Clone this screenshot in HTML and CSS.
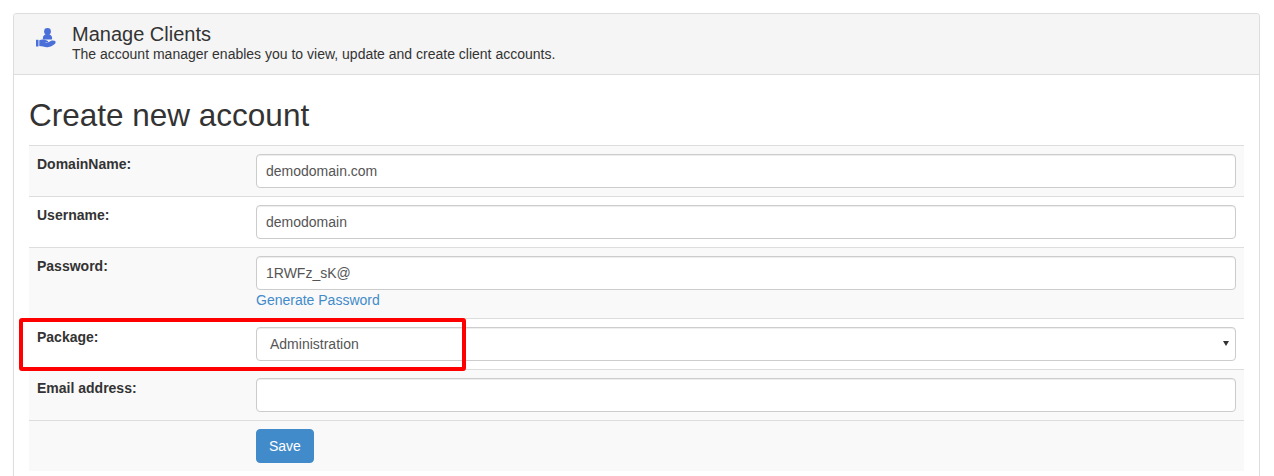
FILE: index.html
```html
<!DOCTYPE html>
<html lang="en">
<head>
<meta charset="utf-8">
<title>Manage Clients</title>
<link rel="stylesheet" href="styles.css">
</head>
<body>
<div class="panel">
  <div class="panel-head">
    <svg class="head-icon" viewBox="0 0 20 20" width="20" height="20" aria-hidden="true">
      <circle cx="11.500" cy="3.400" r="3.400" fill="#4a6fd8"/>
      <path d="M6.800 10.500c0-2.700 2-4.400 4.700-4.400s4.700 1.700 4.700 4.400c0 .6-.3 1-.9 1H7.700c-.6 0-.9-.4-.9-1z" fill="#4a6fd8"/>
      <path d="M0 11.800h2.500V18.500H0z" fill="#4a6fd8"/>
      <path d="M3.300 12.300c1.800-1 3.700-1.100 5.400-.5l2.700.9c1.200.4.900 1.900-.4 1.800l-2.600-.2 2.400.8 4.400-2.300c1-.5 1.700-.4 2.500 0 .5-.3 1.500-.2 1.800.6.300 1-.1 2-1.100 2.800-1.800 1.500-4 2.700-6.500 3-2 .2-3.300-.3-4.800-.8l-3.800-.5z" fill="#4a6fd8"/>
    </svg>
    <div class="head-text">
      <div class="head-title">Manage Clients</div>
      <div class="head-sub">The account manager enables you to view, update and create client accounts.</div>
    </div>
  </div>
  <div class="panel-body">
    <h1 class="title">Create new account</h1>
    <div class="table">
      <div class="row shade">
        <div class="label">DomainName:</div>
        <div class="cell"><div class="input">demodomain.com</div></div>
      </div>
      <div class="row">
        <div class="label">Username:</div>
        <div class="cell"><div class="input">demodomain</div></div>
      </div>
      <div class="row shade">
        <div class="label">Password:</div>
        <div class="cell">
          <div class="input">1RWFz_sK@</div>
          <a class="link" href="#">Generate Password</a>
        </div>
      </div>
      <div class="row">
        <div class="label">Package:</div>
        <div class="cell">
          <div class="input select">Administration<span class="caret"></span></div>
        </div>
      </div>
      <div class="row shade">
        <div class="label">Email address:</div>
        <div class="cell"><div class="input"></div></div>
      </div>
      <div class="row shade">
        <div class="label"></div>
        <div class="cell"><button class="btn" type="button">Save</button></div>
      </div>
    </div>
  </div>
</div>
<div class="highlight"></div>
</body>
</html>
```
FILE: styles.css
```css
* { box-sizing: border-box; }
html, body { height: 100%; }
body {
  margin: 0;
  padding: 13px 14px 0 13px;
  background: #fff;
  color: #333;
  font-family: "Liberation Sans", Arial, sans-serif;
  font-size: 14px;
  line-height: 20px;
  overflow: hidden;
  position: relative;
}
.panel {
  border: 1px solid #ddd;
  border-bottom: 0;
  border-radius: 4px 4px 0 0;
  height: 463px;
}
.panel-head {
  display: flex;
  height: 61px;
  background: #f5f5f5;
  border-bottom: 1px solid #ddd;
  border-radius: 3px 3px 0 0;
  padding: 8px 0 0 22px;
}
.head-icon { margin: 6px 0 0 0; flex: none; }
.head-text { margin-left: 16px; }
.head-title { font-size: 20px; line-height: 24px; }
.head-sub { font-size: 14px; line-height: 16px; }
.panel-body { padding: 0 15px; }
.title {
  margin: 20px 0 10px;
  font-size: 31.5px;
  font-weight: 400;
  line-height: 40px;
  color: #333;
}
.table { border-top: 1px solid #ddd; }
.row {
  display: flex;
  padding: 8px;
  border-top: 1px solid #ddd;
}
.row:first-child { border-top: 0; }
.shade { background: #f9f9f9; }
.label { width: 219px; flex: none; font-weight: 700; }
.cell { flex: 1; min-width: 0; }
.input {
  height: 34px;
  padding: 6px 9px;
  background: #fff;
  border: 1px solid #ccc;
  border-radius: 4px;
  color: #555;
  box-shadow: inset 0 1px 1px rgba(0,0,0,.075);
}
.select { position: relative; padding-left: 13px; }
.caret {
  position: absolute;
  right: 6px;
  top: 13px;
  border-left: 3px solid transparent;
  border-right: 3px solid transparent;
  border-top: 5px solid #333;
}
.link { display: block; color: #428bca; text-decoration: none; }
.btn {
  display: block;
  height: 34px;
  padding: 6px 12px;
  font: inherit;
  color: #fff;
  background: #428bca;
  border: 1px solid #428bca;
  border-radius: 4px;
}
.highlight {
  position: absolute;
  left: 19px;
  top: 318px;
  width: 447px;
  height: 53px;
  border: 4px solid #f00;
  border-radius: 3px;
}
```
